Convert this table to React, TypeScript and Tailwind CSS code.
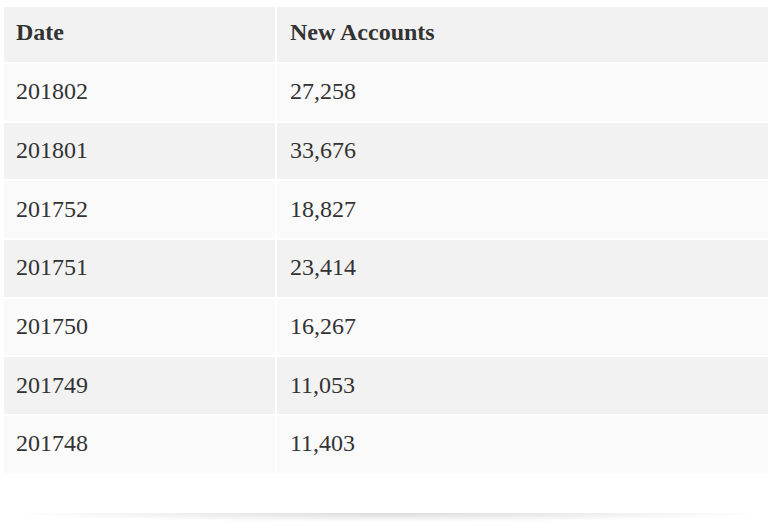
const rows = [
  { date: '201802', count: '27,258' },
  { date: '201801', count: '33,676' },
  { date: '201752', count: '18,827' },
  { date: '201751', count: '23,414' },
  { date: '201750', count: '16,267' },
  { date: '201749', count: '11,053' },
  { date: '201748', count: '11,403' },
];

export default function App() {
  return (
    <div className="w-[779px] h-[528px] bg-white font-['Liberation_Serif',serif] text-[#333] text-[24px] overflow-hidden">
      <div className="pt-[7px] pl-[4px] pr-[11px]">
        <div className="grid grid-cols-[271px_1fr] gap-x-[2px] gap-y-[2px]">
          <div className="h-[55px] bg-[#f2f2f2] flex items-center pl-[12px] pb-[5px] font-bold">Date</div>
          <div className="h-[55px] bg-[#f2f2f2] flex items-center pl-[13px] pb-[5px] font-bold">New Accounts</div>
          {rows.map((row, i) => {
            const bg = i % 2 === 0 ? 'bg-[#fafafa]' : 'bg-[#f2f2f2]';
            return [
              <div key={row.date + 'd'} className={`h-[56.7px] ${bg} flex items-center pl-[12px] pb-[2px]`}>
                {row.date}
              </div>,
              <div key={row.date + 'c'} className={`h-[56.7px] ${bg} flex items-center pl-[13px] pb-[2px]`}>
                {row.count}
              </div>,
            ];
          })}
        </div>
      </div>
      <div className="mt-[40px] mx-[4px] h-[9px] bg-[radial-gradient(ellipse_at_top,rgba(0,0,0,0.14),rgba(0,0,0,0)_70%)]" />
    </div>
  );
}
